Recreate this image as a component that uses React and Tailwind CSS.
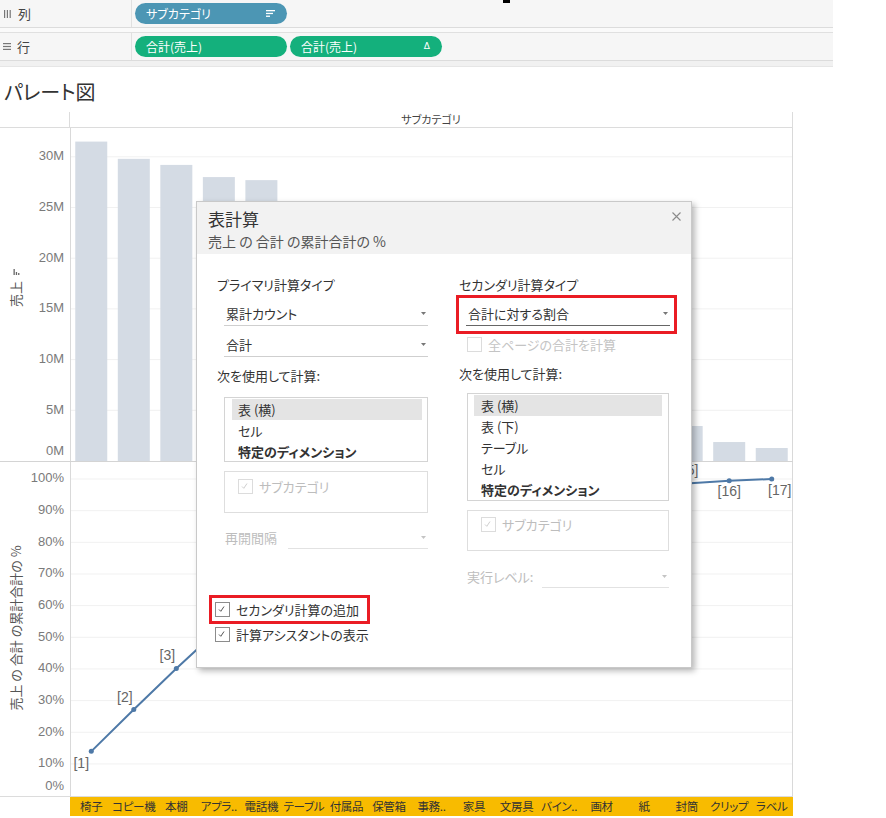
import React from 'react';

const JP = "font-['Noto_Sans_CJK_JP','Noto_Sans',sans-serif] [font-feature-settings:'palt']";

const bars = [31.5, 29.8, 29.2, 28.0, 27.7, 16, 12, 9.6, 8.5, 7.5, 6.5, 5, 4, 3.6, 3.45, 1.87, 1.28];
const names = ['椅子', 'コピー機', '本棚', 'アプラ..', '電話機', 'テーブル', '付属品', '保管箱', '事務..', '家具', '文房具', 'バイン..', '画材', '紙', '封筒', 'クリップ', 'ラベル'];

const total = bars.reduce((a, b) => a + b, 0);
let run = 0;
const cum = bars.map((v) => {
  run += v;
  return (run / total) * 100;
});

const STEP = 723 / 17;
const cx = (i) => 70 + STEP * (i + 0.5);
const barY = (v) => 333 - v * 10.14;
const pctY = (p) => 667.6 - p * 3.166;

// which point labels are shown, with offsets
const pointLabels = [
  { i: 0, dx: -10, dy: 13 },
  { i: 1, dx: -9, dy: -11 },
  { i: 2, dx: -9, dy: -12 },
  { i: 14, dx: 0, dy: -12 },
  { i: 15, dx: 0, dy: 11 },
  { i: 16, dx: 8, dy: 12 },
];

const Arrow = ({ color = '#777' }) => (
  <svg width="5" height="3" viewBox="0 0 5 3" className="mr-[2px]">
    <path d="M0 0 L5 0 L2.5 3 Z" fill={color} />
  </svg>
);

const CheckBox = ({ checked, disabled }) => (
  <span
    className={`w-[15px] h-[15px] shrink-0 border bg-white flex items-start justify-start ${
      disabled ? 'border-[#dcdcdc]' : 'border-[#8c8c8c]'
    }`}
  >
    {checked && (
      <svg width="13" height="13" viewBox="0 0 13 13">
        <path d="M3 6.5 L4.8 8.3 L8 3.5" fill="none" stroke={disabled ? '#cfcfcf' : '#555'} strokeWidth="1" />
      </svg>
    )}
  </span>
);

const Dropdown = ({ text, className = '', line = 'border-[#cfcfcf]' }) => (
  <div className={`h-[24px] flex items-center justify-between border-b ${line} ${className}`}>
    <span className="pl-[2px] text-[13px] text-[#333]">{text}</span>
    <Arrow />
  </div>
);

const Chart = () => (
  <svg width="793" height="668" className="block">
    {/* gridlines bar pane */}
    {[5, 10, 15, 20, 25, 30].map((v) => (
      <line key={v} x1="70" x2="793" y1={barY(v)} y2={barY(v)} stroke="#f1f1f1" />
    ))}
    {/* gridlines line pane */}
    {[10, 20, 30, 40, 50, 60, 70, 80, 90, 100].map((p) => (
      <line key={p} x1="70" x2="793" y1={pctY(p)} y2={pctY(p)} stroke="#f1f1f1" />
    ))}

    {bars.map((v, i) => (
      <rect key={i} x={cx(i) - 16} y={barY(v)} width="32" height={333 - barY(v)} fill="#d4dbe4" />
    ))}

    {/* axes */}
    <line x1="70.5" x2="70.5" y1="0" y2="668" stroke="#d9d9d9" />
    <line x1="792.5" x2="792.5" y1="0" y2="668" stroke="#d9d9d9" />
    <line x1="0" x2="793" y1="333.5" y2="333.5" stroke="#d4d4d4" />

    <g fontFamily="'Liberation Sans', Arial, sans-serif" fontSize="13" fill="#7a7a7a" textAnchor="end">
      {[5, 10, 15, 20, 25, 30].map((v) => (
        <text key={v} x="64" y={barY(v)} dominantBaseline="middle">{v}M</text>
      ))}
      <text x="64" y="324" dominantBaseline="middle">0M</text>
      {[10, 20, 30, 40, 50, 60, 70, 80, 90, 100].map((p) => (
        <text key={p} x="64" y={pctY(p)} dominantBaseline="middle">{p}%</text>
      ))}
      <text x="64" y="659" dominantBaseline="middle">0%</text>
    </g>

    {/* axis titles */}
    <g fontFamily="'Noto Sans CJK JP', sans-serif" fontSize="13" fill="#555" textAnchor="middle">
      <text x="17" y="166" transform="rotate(-90 17 166)" dominantBaseline="middle">売上</text>
      <text x="17" y="500" transform="rotate(-90 17 500)" dominantBaseline="middle">売上 の 合計 の累計合計の %</text>
    </g>
    <g fill="#666">
      <rect x="13.5" y="141" width="1.3" height="6" />
      <rect x="15.8" y="144" width="1.3" height="3" />
      <rect x="18.1" y="145" width="1.3" height="2" />
    </g>

    {/* pareto line */}
    <polyline
      points={cum.map((p, i) => `${cx(i)},${pctY(p)}`).join(' ')}
      fill="none"
      stroke="#4e79a7"
      strokeWidth="2"
    />
    {cum.map((p, i) => (
      <circle key={i} cx={cx(i)} cy={pctY(p)} r="2.5" fill="#4e79a7" />
    ))}
    <g fontFamily="'Liberation Sans', Arial, sans-serif" fontSize="14" fill="#666" textAnchor="middle">
      {pointLabels.map(({ i, dx, dy }) => (
        <text key={i} x={cx(i) + dx} y={pctY(cum[i]) + dy} dominantBaseline="middle">
          [{i + 1}]
        </text>
      ))}
    </g>
  </svg>
);

const Dialog = () => (
  <div className="absolute left-[196px] top-[201px] w-[496px] h-[467px] bg-white border border-[#c9c9c9] shadow-[3px_3px_6px_rgba(0,0,0,0.28)] flex flex-col">
    <div className="relative h-[52px] bg-[#f2f2f2] pl-[11px] pt-[6px]">
      <div className="text-[17px] leading-[22px] text-[#333]">表計算</div>
      <div className="text-[14px] leading-[18px] text-[#555] mt-[2px]">売上 の 合計 の累計合計の %</div>
      <svg width="9" height="9" viewBox="0 0 9 9" className="absolute right-[10px] top-[10px]">
        <path d="M0.5 0.5 L8.5 8.5 M8.5 0.5 L0.5 8.5" stroke="#8a8a8a" strokeWidth="1.1" />
      </svg>
    </div>

    <div className="flex pl-[20px] pt-[22px] text-[13px] text-[#333]">
      {/* primary */}
      <div className="w-[211px] flex flex-col">
        <div className="leading-[18px]">プライマリ計算タイプ</div>
        <Dropdown text="累計カウント" className="ml-[7px] mt-[8px]" />
        <Dropdown text="合計" className="ml-[7px] mt-[7px]" />
        <div className="leading-[18px] mt-[10px]">次を使用して計算:</div>
        <div className="ml-[7px] mt-[12px] h-[65px] border border-[#d4d4d4] pl-[7px] pr-[5px] pt-[1px]">
          <div className="h-[21px] leading-[21px] bg-[#e4e4e4] pl-[6px]">表 (横)</div>
          <div className="h-[21px] leading-[21px] pl-[6px]">セル</div>
          <div className="h-[21px] leading-[21px] pl-[6px] font-bold">特定のディメンション</div>
        </div>
        <div className="ml-[7px] mt-[9px] h-[42px] border border-[#dedede] pl-[13px] pt-[5px]">
          <div className="flex items-center gap-[6px]">
            <CheckBox checked disabled />
            <span className="text-[#bdbdbd]">サブカテゴリ</span>
          </div>
        </div>
        <div className="mt-[13px] h-[23px] flex items-center">
          <span className="ml-[8px] w-[63px] text-[#bdbdbd]">再開間隔</span>
          <div className="flex-1 h-[23px] border-b border-[#e2e2e2] flex items-center justify-end">
            <Arrow color="#c4c4c4" />
          </div>
        </div>
      </div>

      {/* secondary */}
      <div className="ml-[28px] w-[221px] flex flex-col">
        <div className="leading-[18px] pl-[3px]">セカンダリ計算タイプ</div>
        <div className="mt-[1px] h-[39px] border-[3px] border-[#ea1c24]">
          <Dropdown text="合計に対する割合" className="ml-[7px] mr-[4px] mt-[4px]" line="border-[#666]" />
        </div>
        <div className="mt-[3px] ml-[11px] flex items-center gap-[6px] h-[15px]">
          <CheckBox disabled />
          <span className="text-[#c4c4c4]">全ページの合計を計算</span>
        </div>
        <div className="leading-[18px] mt-[13px] pl-[3px]">次を使用して計算:</div>
        <div className="ml-[11px] w-[202px] mt-[10px] h-[108px] border border-[#d4d4d4] pl-[6px] pr-[6px] pt-[1px]">
          <div className="h-[21px] leading-[21px] bg-[#e4e4e4] pl-[7px]">表 (横)</div>
          <div className="h-[21px] leading-[21px] pl-[7px]">表 (下)</div>
          <div className="h-[21px] leading-[21px] pl-[7px]">テーブル</div>
          <div className="h-[21px] leading-[21px] pl-[7px]">セル</div>
          <div className="h-[21px] leading-[21px] pl-[7px] font-bold">特定のディメンション</div>
        </div>
        <div className="ml-[11px] w-[202px] mt-[9px] h-[41px] border border-[#dedede] pl-[13px] pt-[4px]">
          <div className="flex items-center gap-[6px]">
            <CheckBox checked disabled />
            <span className="text-[#bdbdbd]">サブカテゴリ</span>
          </div>
        </div>
        <div className="mt-[15px] ml-[11px] w-[202px] h-[22px] flex items-center">
          <span className="w-[75px] text-[#bdbdbd]">実行レベル:</span>
          <div className="flex-1 h-[22px] border-b border-[#e2e2e2] flex items-center justify-end">
            <Arrow color="#c4c4c4" />
          </div>
        </div>
      </div>
    </div>

    <div className="ml-[12px] mt-[7px] w-[161px] h-[29px] border-[3px] border-[#ea1c24] pl-[3px] flex items-center gap-[6px] text-[13px] text-[#333]">
      <CheckBox checked />
      <span>セカンダリ計算の追加</span>
    </div>
    <div className="ml-[18px] mt-[1px] flex items-center gap-[6px] text-[13px] text-[#333]">
      <CheckBox checked />
      <span>計算アシスタントの表示</span>
    </div>
  </div>
);

const Pill = ({ color, label, icon }) => (
  <div className={`w-[152px] h-[21px] rounded-full ${color} flex items-center justify-between pl-[11px] pr-[12px] text-white text-[12px]`}>
    <span>{label}</span>
    {icon}
  </div>
);

export default function App() {
  return (
    <div className={`relative w-[886px] h-[818px] bg-white overflow-hidden ${JP}`}>
      {/* shelves */}
      <div className="w-[833px] bg-[#f1f1f1] pb-[5px] border-b border-[#e6e6e6]">
        <div className="h-[28px] bg-[#f6f6f6] border-b border-[#dcdcdc] flex">
          <div className="w-[132px] border-r border-[#e0e0e0] flex items-center gap-[7px] pl-[4px] text-[13px] text-[#444]">
            <svg width="7" height="8" viewBox="0 0 7 8">
              <rect x="0" y="0" width="1.2" height="8" fill="#777" />
              <rect x="2.8" y="0" width="1.2" height="8" fill="#777" />
              <rect x="5.6" y="0" width="1.2" height="8" fill="#777" />
            </svg>
            <span>列</span>
          </div>
          <div className="flex items-center pl-[3px]">
            <Pill
              color="bg-[#4c96b4]"
              label="サブカテゴリ"
              icon={
                <svg width="9" height="7" viewBox="0 0 9 7">
                  <rect x="0" y="0" width="9" height="1.3" fill="#fff" />
                  <rect x="0" y="2.8" width="7" height="1.3" fill="#fff" />
                  <rect x="0" y="5.6" width="4" height="1.3" fill="#fff" />
                </svg>
              }
            />
          </div>
        </div>
        <div className="h-[5px] bg-[#fafafa] border-b border-[#e0e0e0]" />
        <div className="h-[28px] bg-[#f6f6f6] border-b border-[#dcdcdc] flex">
          <div className="w-[132px] border-r border-[#e0e0e0] flex items-center gap-[6px] pl-[3px] text-[13px] text-[#444]">
            <svg width="8" height="7" viewBox="0 0 8 7">
              <rect x="0" y="0" width="8" height="1.2" fill="#777" />
              <rect x="0" y="2.9" width="8" height="1.2" fill="#777" />
              <rect x="0" y="5.8" width="8" height="1.2" fill="#777" />
            </svg>
            <span>行</span>
          </div>
          <div className="flex items-center gap-[3px] pl-[3px]">
            <Pill color="bg-[#14b07c]" label="合計(売上)" />
            <Pill
              color="bg-[#14b07c]"
              label="合計(売上)"
              icon={<span className="text-[9px] font-['DejaVu_Sans',sans-serif]">Δ</span>}
            />
          </div>
        </div>
      </div>
      <div className="absolute left-[503px] top-0 w-[7px] h-[3px] bg-black" />

      {/* title */}
      <div className="h-[45px] flex items-center pl-[4px] pt-[5px] text-[20px] text-[#333]">パレート図</div>

      {/* chart */}
      <div className="w-[793px] flex flex-col">
        <div className="h-[16px] flex border-b border-[#dcdcdc]">
          <div className="w-[70px] border-r border-[#dcdcdc]" />
          <div className="w-[723px] border-r border-[#dcdcdc] flex items-center justify-center text-[11px] text-[#444]">
            サブカテゴリ
          </div>
        </div>
        <Chart />
        <div className="h-[20px] flex border-t border-[#dcdcdc]">
          <div className="w-[70px]" />
          <div className="w-[723px] bg-[#f8bb00] grid grid-cols-[repeat(17,minmax(0,1fr))] text-[11.5px] text-[#333]">
            {names.map((n) => (
              <div key={n} className="flex items-center justify-center whitespace-nowrap tracking-[-0.3px]">
                {n}
              </div>
            ))}
          </div>
        </div>
      </div>

      <Dialog />
    </div>
  );
}
